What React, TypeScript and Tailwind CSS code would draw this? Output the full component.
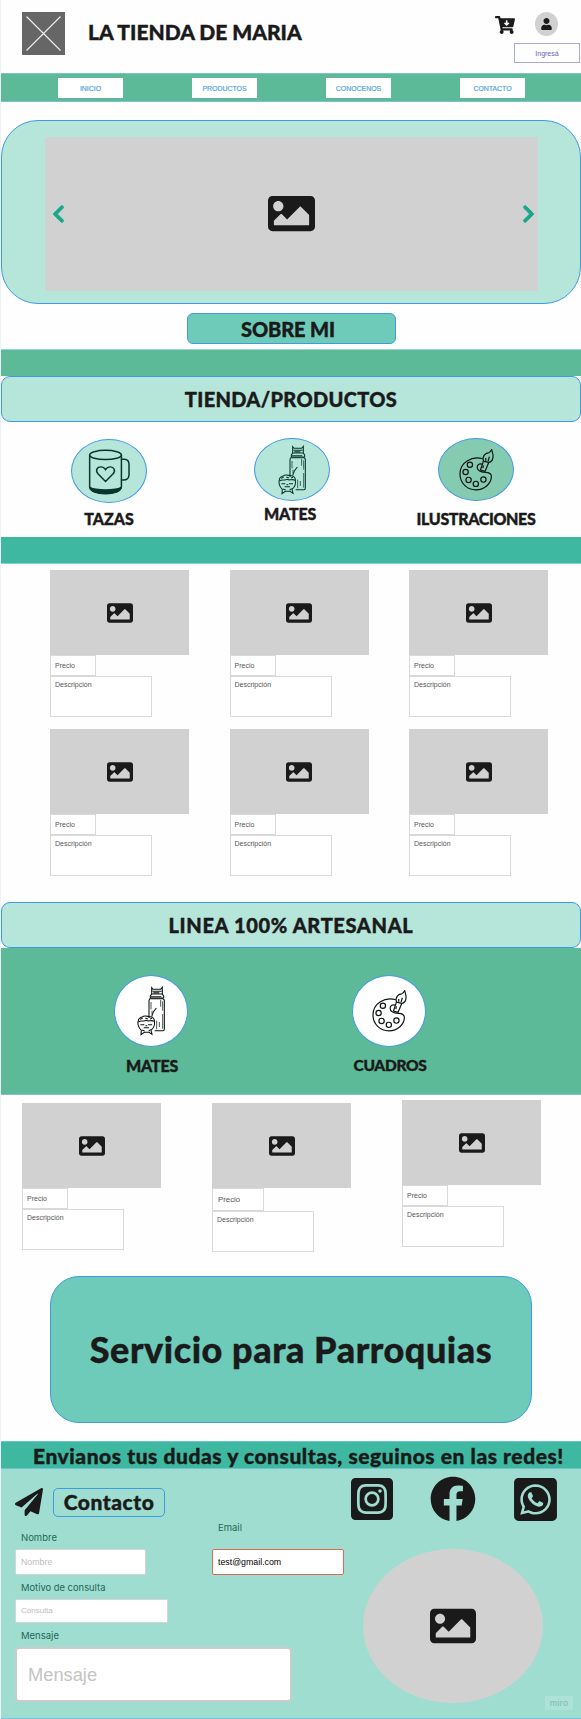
import React from "react";
import {
  FaCartArrowDown,
  FaChevronLeft,
  FaChevronRight,
  FaFacebook,
  FaImage,
  FaInstagramSquare,
  FaPaperPlane,
  FaUser,
  FaWhatsappSquare,
} from "react-icons/fa";

const display =
  "font-['Lato',sans-serif] font-black leading-none whitespace-nowrap text-[#1a1a1a] [-webkit-text-stroke:0.4px_#1a1a1a] [stroke-linejoin:round]";

function Placeholder({ className, icon }: { className: string; icon: number }) {
  return (
    <div className={`flex shrink-0 items-center justify-center bg-[#d1d1d1] text-[#1a1a1a] ${className}`}>
      <FaImage size={icon} />
    </div>
  );
}

function MugIcon() {
  return (
    <svg viewBox="84 50 130 142" className="h-[47px] w-[43px]" fill="none" stroke="#06362d" strokeWidth="4.5">
      <ellipse cx="137" cy="71" rx="48" ry="14" />
      <path d="M89 71V168C89 180 110 187 137 187S185 180 185 168V71" />
      <path d="M186 84H194Q208 84 208 100V130Q208 147 190 147H186" />
      <path d="M91 170C106 179 168 179 183 170C180 184 160 188 137 188S94 184 91 170Z" fill="#06362d" />
      <path d="M137 151L114 128C105 116 113 107 122 107C130 107 134 110 137 115C140 110 144 107 152 107C161 107 169 117 160 128Z" />
    </svg>
  );
}

function MateIcon({ color }: { color: string }) {
  return (
    <svg viewBox="652 42 90 150" className="h-[50px] w-[30px]" fill="none" stroke={color} strokeWidth="3.2">
      <path d="M699 47L703 52H726L731 46V66L735 72V78H695V72L699 66Z" />
      <path d="M701 58H729M699 66H731M704 62H722M697 74H728" />
      <path d="M693 80L691 86V138M708 176H733Q737 176 737 170V84L733 80H693" />
      <path d="M732 88V116M732 126V170M726 84V104M697 90V112M714 146V172M722 150V165M700 116V128" strokeWidth="2.2" />
      <path d="M699 134L704 120L713 108" />
      <path d="M660 142C665 133 671 136 674 133C682 130 690 135 696 134C703 136 707 141 707 146C709 160 704 170 697 174L700 187L691 181H677L667 188L668 175C659 168 655 154 660 142Z" />
      <path d="M659 150C668 143 674 150 683 145C690 150 698 142 706 148M664 142L672 139M680 138L688 141M694 141L700 139" />
      <path d="M665 158H677M688 158H700M675 167H691M680 161H686M670 174L678 177M690 177L696 173" />
    </svg>
  );
}

function PaletteIcon() {
  return (
    <svg viewBox="175 52 112 132" className="h-[44px] w-[37px]" fill="none" stroke="#0d1412" strokeWidth="3.6" strokeLinejoin="round">
      <path d="M250 84C218 74 181 94 181 130C181 158 203 178 229 178C256 178 276 158 276 138C276 128 268 125 258 125C242 125 232 118 233 109C234 101 240 98 248 100" />
      <circle cx="211" cy="102" r="8" />
      <circle cx="198" cy="124" r="8" />
      <circle cx="207" cy="148" r="8" />
      <circle cx="229" cy="160" r="8" />
      <circle cx="252" cy="147" r="8" />
      <path d="M252 91L243 118L257 122L268 95" />
      <path d="M252 91C247 74 260 66 268 66C273 64 275 60 277 56C278 63 283 72 281 79C280 88 274 94 268 95Z" />
      <path d="M259 90V82M266 91L270 78M252 104L250 112" />
    </svg>
  );
}

const oval = "flex items-center justify-center rounded-[50%] border border-[#3f9be0]";

type CardProps = {
  className?: string;
  priceClass?: string;
};

function ProductCard({
  className = "",
  priceClass = "h-[21px] w-[46px] text-[7px] pl-[4px]",
}: CardProps) {
  return (
    <article className={`flex w-[139px] flex-col text-[#555] ${className}`}>
      <Placeholder className="h-[85px] w-[139px]" icon={26} />
      <div className={`flex items-center border border-[#d9d9d9] bg-white leading-none ${priceClass}`}>
        Precio
      </div>
      <div className="h-[41px] w-[102px] border border-[#d9d9d9] bg-white pl-[4px] pt-[4px] text-[7px] leading-[8px]">
        Descripción
      </div>
    </article>
  );
}

export default function App() {
  return (
    <main className="h-[1719px] w-[581px] overflow-hidden border-l border-[#edf1fa] bg-[#fefefe] font-['Liberation_Sans',Arial,sans-serif] text-[#1a1a1a]">
      <header className="flex h-[73px] items-start">
        <svg viewBox="0 0 43 43" className="ml-[21px] mt-[12px] h-[43px] w-[43px] bg-[#666]">
          <path d="M4.5 4.5L38.5 38.5M38.5 4.5L4.5 38.5" stroke="#eee" strokeWidth="1.1" />
        </svg>
        <h1 className={`ml-[23px] mt-[21px] w-[215px] text-[21px] ${display}`}>
          LA TIENDA DE MARIA
        </h1>
        <div className="ml-auto mr-px flex w-[66px] flex-col">
          <div className="-ml-[19px] flex pt-[12px]">
            <FaCartArrowDown className="mt-[3px] h-[20px] w-[20px]" />
            <div className="ml-[20px] flex h-[24px] w-[23px] items-center justify-center rounded-[50%] bg-[#d1d1d1]">
              <FaUser className="h-[12px] w-[11px]" />
            </div>
          </div>
          <button className="mt-[7px] flex h-[20px] items-center justify-center border border-[#a9a9d8] text-[7px] leading-none text-[#6a62b5]">
            Ingresá
          </button>
        </div>
      </header>

      <nav className="flex h-[29px] items-center gap-[69px] border-y border-[#7cc3cf] bg-[#5dba99] pl-[57px] text-[7px] leading-none text-[#5aa5dc]">
        {["INICIO", "PRODUCTOS", "CONOCENOS", "CONTACTO"].map((item) => (
          <a key={item} className="mt-px flex h-[20px] w-[65px] items-center justify-center bg-white tracking-[-0.05px] [-webkit-text-stroke:0.2px]">
            {item}
          </a>
        ))}
      </nav>

      <section className="mt-[18px] flex h-[184px] items-start justify-center rounded-[37px] border border-[#3f9be0] bg-[#b6e5da] pt-[16px]">
        <div className="flex h-[154px] w-[493px] items-center justify-between bg-[#d1d1d1] pl-[7px] pr-[3px]">
          <FaChevronLeft className="h-[20px] w-[13px] text-[#16a88a]" stroke="currentColor" strokeWidth={20} />
          <FaImage size={47} className="-ml-[4px] -mt-px" />
          <FaChevronRight className="h-[20px] w-[13px] text-[#16a88a]" stroke="currentColor" strokeWidth={20} />
        </div>
      </section>

      <div className="mx-auto mt-[9px] flex h-[31px] w-[209px] items-center justify-center rounded-[6px] border border-[#3f9be0] bg-[#6ecbb9] pr-[6px]">
        <h2 className={`text-[20px] tracking-[-0.1px] ${display}`}>SOBRE MI</h2>
      </div>

      <div className="mt-[5px] h-[27px] border-t border-[#9bd6dc] bg-[#5dba99]" />

      <section>
        <div className="flex h-[46px] items-center justify-center rounded-[9px] border border-[#3f9be0] bg-[#b6e5da]">
          <h2 className={`text-[20px] tracking-[0.33px] ${display}`}>TIENDA/PRODUCTOS</h2>
        </div>
        <div className="flex h-[115px] items-start">
          <figure className="ml-[48px] mt-[17px] flex w-[120px] flex-col items-center">
            <div className={`h-[64px] w-[76px] bg-[#b6e5da] ${oval}`}>
              <MugIcon />
            </div>
            <figcaption className={`mt-[8px] text-[16px] ${display}`}>TAZAS</figcaption>
          </figure>
          <figure className="ml-[62.5px] mt-[16px] flex w-[120px] flex-col items-center">
            <div className={`h-[63px] w-[76px] bg-[#b6e5da] ${oval}`}>
              <MateIcon color="#06362d" />
            </div>
            <figcaption className={`mt-[5px] pr-[3px] text-[16px] tracking-[-0.15px] ${display}`}>MATES</figcaption>
          </figure>
          <figure className="ml-[64.5px] mt-[16px] flex w-[120px] flex-col items-center">
            <div className={`h-[63px] w-[76px] bg-[#85cbb2] ${oval}`}>
              <PaletteIcon />
            </div>
            <figcaption className={`mt-[10px] text-[16px] tracking-[-0.35px] ${display}`}>ILUSTRACIONES</figcaption>
          </figure>
        </div>
      </section>

      <div className="h-[27px] border-b border-[#86cfdc] bg-[#3eb8a0]" />

      <section className="grid h-[338px] grid-cols-[139px_139px_139px] content-start gap-x-[40.5px] gap-y-[12px] pl-[49px] pt-[6px]">
        {[0, 1, 2, 3, 4, 5].map((n) => (
          <ProductCard key={n} />
        ))}
      </section>

      <section>
        <div className="flex h-[46px] items-center justify-center rounded-[9px] border border-[#3f9be0] bg-[#b6e5da]">
          <h2 className={`text-[20px] tracking-[0.65px] ${display}`}>LINEA 100% ARTESANAL</h2>
        </div>
        <div className="flex h-[147px] border-b border-[#7cc3cf] bg-[#5dba99] pt-[27px]">
          <figure className="ml-[91px] flex w-[118px] flex-col items-center">
            <div className={`h-[72px] w-[74px] bg-white ${oval}`}>
              <MateIcon color="#0d1412" />
            </div>
            <figcaption className={`mt-[11px] pl-[2px] text-[16px] tracking-[-0.15px] ${display}`}>MATES</figcaption>
          </figure>
          <figure className="ml-[120px] flex w-[118px] flex-col items-center">
            <div className={`h-[72px] w-[74px] bg-white ${oval}`}>
              <PaletteIcon />
            </div>
            <figcaption className={`mt-[11px] pl-[2px] text-[15.5px] tracking-[-0.3px] ${display}`}>CUADROS</figcaption>
          </figure>
        </div>
      </section>

      <section className="flex h-[181px] items-start pl-[21px]">
        <ProductCard className="mt-[8px]" />
        <ProductCard
          className="ml-[51px] mt-[8px]"
          priceClass="h-[23px] w-[52px] text-[7.8px] pl-[5px]"
        />
        <ProductCard className="ml-[51px] mt-[5px]" />
      </section>

      <section className="ml-[49px] flex h-[147px] w-[482px] items-center justify-center rounded-[29px] border border-[#3f9be0] bg-[#6ecbb9]">
        <h2 className={`pb-[2px] text-[36px] tracking-[0.55px] ${display}`}>Servicio para Parroquias</h2>
      </section>

      <div className="mt-[18px] flex h-[28px] items-center border-y border-[#6dc3d0] bg-[#3eb8a0] pl-[32px]">
        <p className={`text-[21px] tracking-[0.55px] ${display}`}>Envianos tus dudas y consultas, seguinos en las redes!</p>
      </div>

      <footer className="flex h-[250px] border-b border-[#7cc6da] bg-[#9fddd0]">
        <form className="flex w-[343px] flex-col pl-[14px]">
          <div className="mt-[19px] flex h-[29px]">
            <FaPaperPlane size={28} />
            <div className="ml-[10px] flex h-[29px] w-[112px] items-center justify-center rounded-[5px] border-[1.5px] border-[#3f9be0]">
              <h2 className={`pb-[3px] text-[21px] tracking-[0.55px] ${display}`}>Contacto</h2>
            </div>
          </div>
          <div className="flex justify-between">
            <label className="flex w-[131px] flex-col font-['Inter',sans-serif] text-[9.5px] leading-none text-[#21695a]">
              <span className="mt-[16px] pl-[6px]">Nombre</span>
              <input
                className="mt-[6px] h-[26px] rounded-[2px] border border-[#cfd8d5] bg-white pl-[5px] font-['Liberation_Sans',sans-serif] text-[8.8px] text-black placeholder:text-[#bdbdbd]"
                placeholder="Nombre"
              />
            </label>
            <label className="flex w-[132px] flex-col font-['Inter',sans-serif] text-[9.5px] leading-none text-[#21695a]">
              <span className="mt-[6px] pl-[6px]">Email</span>
              <input
                className="mt-[16px] h-[26px] rounded-[2px] border border-[#dc6b56] bg-white pl-[5px] font-['Liberation_Sans',sans-serif] text-[8.8px] text-black"
                defaultValue="test@gmail.com"
              />
            </label>
          </div>
          <label className="flex w-[153px] flex-col font-['Inter',sans-serif] text-[9.4px] leading-none text-[#21695a]">
            <span className="mt-[8px] pl-[6px]">Motivo de consulta</span>
            <input
              className="mt-[7px] h-[24px] rounded-[1px] border border-[#cfd8d5] bg-white pl-[5px] font-['Liberation_Sans',sans-serif] text-[8px] text-black placeholder:text-[#bdbdbd]"
              placeholder="Consulta"
            />
          </label>
          <label className="flex w-[277px] flex-col font-['Inter',sans-serif] text-[9.5px] leading-none text-[#21695a]">
            <span className="mt-[8px] pl-[6px]">Mensaje</span>
            <input
              className="mt-[7px] h-[55px] rounded-[4px] border-2 border-[#cbcbcb] bg-white pl-[11px] font-['Liberation_Sans',sans-serif] text-[18.3px] text-black placeholder:text-[#c4c4c4]"
              placeholder="Mensaje"
            />
          </label>
        </form>
        <aside className="flex flex-1 flex-col">
          <div className="flex h-[54px] items-start pl-[4px] pt-[7px]">
            <FaInstagramSquare className="mt-[-1px] h-[48px] w-[48px]" />
            <FaFacebook className="ml-[34px] h-[46px] w-[46px]" />
            <FaWhatsappSquare className="ml-[35px] mt-[-1px] h-[49px] w-[49px]" />
          </div>
          <div className="ml-[19px] mt-[26px] flex h-[154px] w-[180px] items-center justify-center rounded-[50%] bg-[#d1d1d1]">
            <FaImage size={46} />
          </div>
          <div className="-mt-[7px] ml-[201px] flex h-[14px] w-[28px] items-center justify-center bg-[#ace2d7] text-[9px] leading-none tracking-[0.3px] text-[#7fb8ac]">
            miro
          </div>
        </aside>
      </footer>
    </main>
  );
}
